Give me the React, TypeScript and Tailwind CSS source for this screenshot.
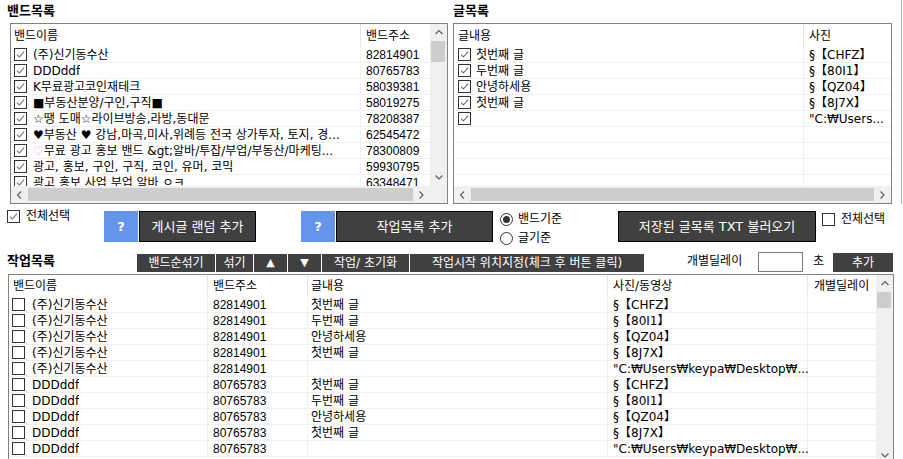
import React from 'react';

type Cell = React.ReactNode;

const bands: [Cell, string][] = [
  ['(주)신기동수산', '82814901'],
  ['DDDddf', '80765783'],
  ['K무료광고코인재테크', '58039381'],
  ['■부동산분양/구인,구직■', '58019275'],
  ['☆땡 도매☆라이브방송,라방,동대문', '78208387'],
  ['♥부동산 ♥ 강남,마곡,미사,위례등 전국 상가투자, 토지, 경...', '62545472'],
  [
    <>
      <span className="text-[#f08fa0]">♡</span>무료 광고 홍보 밴드 &amp;gt;알바/투잡/부업/부동산/마케팅...
    </>,
    '78300809',
  ],
  ['광고, 홍보, 구인, 구직, 코인, 유머, 코믹', '59930795'],
  ['광고 홍보 사업 부업 알바 ㅇㅋ', '63348471'],
];

const posts: [string, string, string][] = [
  ['첫번째 글', '§【CHFZ】', '§【CHFZ】'],
  ['두번째 글', '§【80I1】', '§【80I1】'],
  ['안녕하세용', '§【QZ04】', '§【QZ04】'],
  ['첫번째 글', '§【8J7X】', '§【8J7X】'],
  ['', '"C:₩Users...', '"C:₩Users₩keypa₩Desktop₩...'],
];

const jobs = [bands[0], bands[1]].flatMap(([name, addr]) =>
  posts.map(([text, , photo]) => ({ name, addr, text, photo }))
);

// digits in the original are narrow, so number cells use the Arial-width face
const num = "font-['Liberation_Sans','Noto_Sans_CJK_KR',sans-serif]";

const Check = ({ checked = false }: { checked?: boolean }) => (
  <span className="inline-flex w-[13px] h-[13px] shrink-0 items-center justify-center border border-[#333333] bg-white">
    {checked && (
      <svg width="9" height="9" viewBox="0 0 9 9">
        <path d="M1 4.6 L3.4 7 L8 1.6" stroke="#707070" strokeWidth="1.1" fill="none" />
      </svg>
    )}
  </span>
);

const Radio = ({ checked = false }: { checked?: boolean }) => (
  <span className="inline-flex w-[13px] h-[13px] shrink-0 items-center justify-center rounded-full border border-[#333333] bg-white">
    {checked && <span className="w-[7px] h-[7px] rounded-full bg-[#333333]" />}
  </span>
);

const Chevron = ({ dir }: { dir: 'up' | 'down' | 'left' | 'right' }) => {
  const d = {
    up: 'M0.5 5 L4 1.5 L7.5 5',
    down: 'M0.5 1.5 L4 5 L7.5 1.5',
    left: 'M5 0.5 L1.5 4 L5 7.5',
    right: 'M1.5 0.5 L5 4 L1.5 7.5',
  }[dir];
  const vertical = dir === 'up' || dir === 'down';
  return (
    <svg width={vertical ? 8 : 7} height={vertical ? 7 : 8} viewBox={vertical ? '0 0 8 7' : '0 0 7 8'}>
      <path d={d} stroke="#606060" strokeWidth="1.2" fill="none" />
    </svg>
  );
};

const VScroll = ({ thumbTop, thumbH }: { thumbTop: number; thumbH: number }) => (
  <div className="w-[17px] h-full bg-[#f0f0f0] flex flex-col shrink-0">
    <div className="h-[17px] flex items-center justify-center">
      <Chevron dir="up" />
    </div>
    <div className="flex-1 relative">
      <div className="absolute left-[1px] right-[2px] bg-[#cdcdcd]" style={{ top: thumbTop, height: thumbH }} />
    </div>
    <div className="h-[17px] flex items-center justify-center">
      <Chevron dir="down" />
    </div>
  </div>
);

const HScroll = ({ className = '' }: { className?: string }) => (
  <div className={`h-[17px] bg-[#f0f0f0] flex ${className}`}>
    <div className="w-[17px] flex items-center justify-center">
      <Chevron dir="left" />
    </div>
    <div className="flex-1 my-[2px] bg-[#cdcdcd]" />
    <div className="w-[17px] flex items-center justify-center">
      <Chevron dir="right" />
    </div>
  </div>
);

const HelpBtn = ({ className = '' }: { className?: string }) => (
  <div className={`w-[34px] h-[31px] bg-[#6495ed] text-white font-bold text-[13px] flex items-center justify-center ${className}`}>
    ?
  </div>
);

const DarkBtn = ({ children, className = '' }: { children: React.ReactNode; className?: string }) => (
  <div className={`h-[31px] bg-[#404040] border border-black text-white text-[13px] flex items-center justify-center ${className}`}>
    {children}
  </div>
);

const ToolBtn = ({ children, w }: { children: React.ReactNode; w: string }) => (
  <div className={`${w} h-[18px] bg-[#404040] text-white text-[12px] flex items-center justify-center`}>{children}</div>
);

export default function App() {
  return (
    <div className="w-[903px] h-[459px] overflow-hidden bg-white text-black text-[12px] leading-[16px] font-['DejaVu_Sans','Noto_Sans_CJK_KR',sans-serif]">
      {/* top lists */}
      <div className="flex h-[204px]">
        <div className="w-[451px] flex flex-col">
          <div className="h-[23px] pl-[7px] pt-[3px] font-bold text-[13px]">밴드목록</div>
          <div className="ml-[10px] w-[438px] h-[181px] border border-[#828282] flex flex-col">
            <div className="flex h-[162px]">
              <div className="w-[419px] flex flex-col overflow-hidden">
                <div className="flex h-[23px] shrink-0">
                  <div className="w-[350px] pl-[3px] flex items-center border-r border-[#e5e5e5]">밴드이름</div>
                  <div className="flex-1 pl-[5px] flex items-center">밴드주소</div>
                </div>
                {bands.map(([name, addr], i) => (
                  <div key={i} className="flex h-[16px] shrink-0 border-b border-[#f0f0f0]">
                    <div className="w-[350px] pl-[3px] pr-[2px] flex items-center gap-[6px] border-r border-[#f0f0f0] min-w-0">
                      <Check checked />
                      <span className="whitespace-nowrap overflow-hidden">{name}</span>
                    </div>
                    <div className={`flex-1 pl-[5px] flex items-center ${num}`}>{addr}</div>
                  </div>
                ))}
              </div>
              <VScroll thumbTop={0} thumbH={21} />
            </div>
            <div className="flex">
              <HScroll className="w-[419px]" />
              <div className="w-[17px] h-[17px] bg-[#f0f0f0]" />
            </div>
          </div>
        </div>

        <div className="w-[450px] flex flex-col">
          <div className="h-[23px] pl-[2px] pt-[3px] font-bold text-[13px]">글목록</div>
          <div className="ml-[2px] w-[439px] h-[181px] border border-[#828282] flex flex-col">
            <div className="h-[162px] flex flex-col overflow-hidden">
              <div className="flex h-[23px] shrink-0">
                <div className="w-[350px] pl-[4px] flex items-center border-r border-[#e5e5e5]">글내용</div>
                <div className="flex-1 pl-[5px] flex items-center">사진</div>
              </div>
              {[...posts, null, null, null, null].map((p, i) => (
                <div key={i} className="flex h-[16px] shrink-0 border-b border-[#f0f0f0]">
                  <div className="w-[350px] pl-[4px] flex items-center gap-[5px] border-r border-[#f0f0f0]">
                    {p && <Check checked />}
                    {p && <span>{p[0]}</span>}
                  </div>
                  <div className="flex-1 min-w-0 pl-[5px] flex items-center">
                    {p && <span className="whitespace-nowrap">{p[1]}</span>}
                  </div>
                </div>
              ))}
            </div>
            <HScroll />
          </div>
        </div>
        <div className="w-[1px] h-[204px] bg-[#b4b4b4]" />
      </div>

      {/* action buttons */}
      <div className="flex h-[46px] pt-[7px]">
        <div className="w-[104px] pl-[7px]">
          <div className="flex items-center gap-[6px] h-[14px] -mt-[2px]">
            <Check checked />
            <span>전체선택</span>
          </div>
        </div>
        <HelpBtn />
        <DarkBtn className="ml-[1px] w-[117px]">게시글 랜덤 추가</DarkBtn>
        <HelpBtn className="ml-[45px]" />
        <DarkBtn className="ml-[1px] w-[157px]">작업목록 추가</DarkBtn>
        <div className="ml-[7px] w-[118px] flex flex-col">
          <div className="mt-[1px] flex items-center gap-[5px] h-[14px]">
            <Radio checked />
            <span>밴드기준</span>
          </div>
          <div className="mt-[5px] flex items-center gap-[5px] h-[14px]">
            <Radio />
            <span>글기준</span>
          </div>
        </div>
        <DarkBtn className="w-[198px]">저장된 글목록 TXT 불러오기</DarkBtn>
        <div className="ml-[6px] mt-[1px] flex items-center gap-[6px] h-[14px]">
          <Check />
          <span>전체선택</span>
        </div>
      </div>

      {/* job toolbar */}
      <div className="flex items-end h-[24px] pb-[2px]">
        <div className="w-[137px] pl-[7px] self-center font-bold text-[13px]">작업목록</div>
        <div className="flex gap-[1px]">
          <ToolBtn w="w-[78px]">밴드순섞기</ToolBtn>
          <ToolBtn w="w-[37px]">섞기</ToolBtn>
          <ToolBtn w="w-[33px]">
            <span className="text-[11px]">▲</span>
          </ToolBtn>
          <ToolBtn w="w-[33px]">
            <span className="text-[11px]">▼</span>
          </ToolBtn>
          <ToolBtn w="w-[87px]">작업/ 초기화</ToolBtn>
          <ToolBtn w="w-[234px]">작업시작 위치지정(체크 후 버튼 클릭)</ToolBtn>
        </div>
        <div className="ml-[43px] w-[71px] self-center">개별딜레이</div>
        <div className="w-[45px] h-[20px] border border-[#7a7a7a] bg-white" />
        <div className="w-[30px] pl-[10px] self-center">초</div>
        <div className="w-[60px] h-[19px] bg-[#404040] text-white flex items-center justify-center">추가</div>
      </div>

      {/* job table */}
      <div className="ml-[8px] w-[886px] h-[191px] border border-[#828282] flex">
        <div className="w-[868px] flex flex-col overflow-hidden">
          <div className="flex h-[22px] shrink-0">
            <div className="w-[199px] pl-[4px] flex items-center border-r border-[#e5e5e5]">밴드이름</div>
            <div className="w-[100px] pl-[5px] flex items-center border-r border-[#e5e5e5]">밴드주소</div>
            <div className="w-[300px] pl-[3px] flex items-center border-r border-[#e5e5e5]">글내용</div>
            <div className="w-[200px] pl-[5px] flex items-center border-r border-[#e5e5e5]">사진/동영상</div>
            <div className="flex-1 pl-[6px] flex items-center">개별딜레이</div>
          </div>
          {jobs.map((j, i) => (
            <div key={i} className="flex h-[16px] shrink-0 border-b border-[#f0f0f0]">
              <div className="w-[199px] pl-[3px] flex items-center gap-[7px] border-r border-[#f0f0f0]">
                <Check />
                <span className="truncate">{j.name}</span>
              </div>
              <div className={`w-[100px] pl-[5px] flex items-center border-r border-[#f0f0f0] ${num}`}>{j.addr}</div>
              <div className="w-[300px] pl-[3px] flex items-center border-r border-[#f0f0f0]">{j.text}</div>
              <div className="w-[200px] pl-[5px] flex items-center border-r border-[#f0f0f0] min-w-0">
                <span className="whitespace-nowrap">{j.photo}</span>
              </div>
              <div className="flex-1" />
            </div>
          ))}
        </div>
        <VScroll thumbTop={0} thumbH={16} />
      </div>
    </div>
  );
}
